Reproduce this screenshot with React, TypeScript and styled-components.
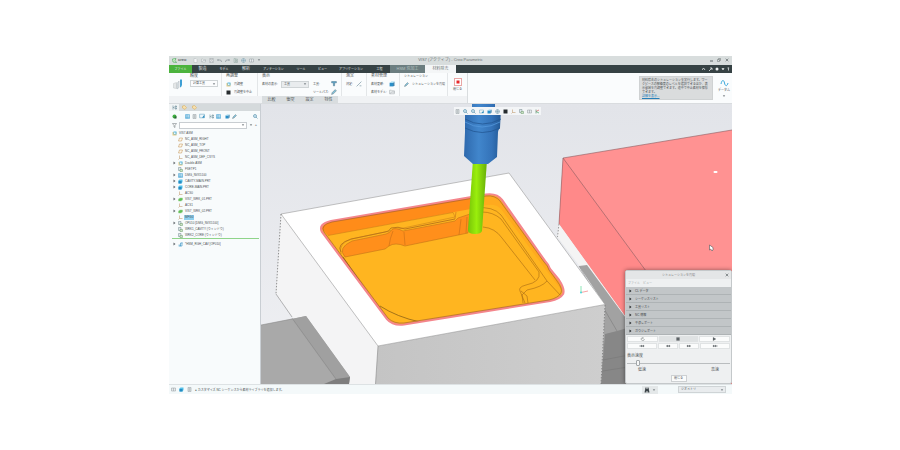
import React from "react";
import styled, { createGlobalStyle } from "styled-components";

const GlobalStyle = createGlobalStyle`
  *, *::before, *::after { box-sizing: border-box; }
  body { margin: 0; background: #ffffff; }
  button, select, input {
    margin: 0; padding: 0; border: 0; border-radius: 0;
    font: inherit; color: inherit; background: none; appearance: none; outline: none;
  }
  svg { display: block; flex: none; }
`;

const Page = styled.div`
  min-height: 100vh;
  padding: 56px 168px 56px 169px;
  display: flex;
  font-family: "Liberation Sans", "Noto Sans CJK JP", sans-serif;
  font-size: 3px;
  line-height: 6px;
  color: #4c5254;
  white-space: nowrap;
`;

const AppWindow = styled.div`
  flex: 1;
  min-width: 0;
  display: flex;
  flex-direction: column;
  background: #f7f9fb;
`;

/* ---------- title bar ---------- */

const TitleBar = styled.header`
  display: grid;
  grid-template-columns: 1fr auto 1fr;
  align-items: center;
  height: 9px;
  padding: 0 3px 1px;
  background: #d8dddd;
`;

const QuickAccess = styled.div`
  display: flex;
  align-items: center;
  gap: 3px;
`;

const Brand = styled.span`
  display: flex;
  align-items: center;
  gap: 1px;
  margin-right: 4px;
  font-size: 4px;
  font-weight: bold;
  color: #596365;
`;

const WindowTitle = styled.h1`
  margin: 0;
  font-size: 4px;
  font-weight: normal;
  color: #6c7273;
`;

const WindowButtons = styled.div`
  display: flex;
  justify-content: flex-end;
  gap: 4px;
`;

const IconButton = styled.button`
  display: flex;
  align-items: center;
  justify-content: center;
`;

/* ---------- tabs ---------- */

const TabBar = styled.nav`
  display: flex;
  height: 8px;
  background: #364244;
`;

type Tone = "file" | "context" | "active" | "plain";

const Tab = styled.button<{ $width: number; $size: number; $tone: Tone }>`
  width: ${(p) => p.$width}px;
  font-size: ${(p) => p.$size}px;
  line-height: 8px;
  text-align: center;
  color: ${(p) => (p.$tone === "active" ? "#6b7173" : p.$tone === "context" ? "#b6c2c2" : "#e3e7e7")};
  background: ${(p) =>
    p.$tone === "file" ? "#4bb33d" : p.$tone === "context" ? "#6c7e80" : p.$tone === "active" ? "#f4f6f7" : "none"};
`;

const TabTools = styled.div`
  flex: 1;
  display: flex;
  justify-content: flex-end;
  align-items: center;
  padding-right: 2px;
`;

/* ---------- ribbon ---------- */

const Ribbon = styled.section`
  display: flex;
  height: 31px;
  background: #fafcfd;
  border-bottom: 1px solid #d9dcdf;
`;

const RibbonMain = styled.div`
  display: flex;
  flex-direction: column;
  border-right: 1px solid #d9dddf;
`;

const RibbonGroups = styled.div`
  flex: 1;
  display: flex;
`;

const Group = styled.div<{ $width: number }>`
  width: ${(p) => p.$width}px;
  padding: 0 4px;
  border-right: 1px solid #e3e6e8;
`;

const GroupTitle = styled.div<{ $small?: boolean }>`
  height: 7px;
  font-size: ${(p) => (p.$small ? 3 : 4)}px;
`;

const Line = styled.div`
  display: flex;
  align-items: center;
  gap: 2px;
  height: 8px;
`;

const FieldLabel = styled.label<{ $width: number }>`
  width: ${(p) => p.$width}px;
`;

const SelectBox = styled.span<{ $width: number; $muted?: boolean }>`
  display: flex;
  align-items: center;
  width: ${(p) => p.$width}px;
  height: 7px;
  padding: 0 1px 0 2px;
  border: 1px solid #cfd4d6;
  background: ${(p) => (p.$muted ? "#e9ecee" : "#fbfcfd")};
  select { flex: 1; min-width: 0; height: 5px; line-height: 5px; }
`;

const Command = styled.button`
  display: flex;
  align-items: center;
  gap: 3px;
  height: 8px;
`;

const BigCommand = styled.button<{ $width: number }>`
  width: ${(p) => p.$width}px;
  display: flex;
  flex-direction: column;
  align-items: center;
  justify-content: center;
  gap: 1px;
  line-height: 5px;
`;

const SubTabs = styled.div`
  display: flex;
  height: 7px;
  padding-left: 93px;
  background: #f0f2f4;
`;

const SubTab = styled.button`
  width: 19px;
  font-size: 4px;
  line-height: 6px;
  text-align: center;
  background: #d9dddf;
`;

const Hint = styled.aside`
  width: 74px;
  margin: 3px 3px 3px auto;
  padding: 1px 2px;
  line-height: 4px;
  background: #dadcdd;
  border: 1px solid #cfd2d3;
  white-space: normal;
  p { margin: 0; }
  a { display: block; color: #267fb8; }
`;

/* ---------- body ---------- */

const Workspace = styled.div`
  flex: 1;
  display: flex;
  min-height: 0;
`;

const Sidebar = styled.aside`
  width: 92px;
  display: flex;
  flex-direction: column;
  background: #f8fbfc;
  border-right: 1px solid #c9ced3;
`;

const SideTabs = styled.div`
  display: flex;
  align-items: center;
  height: 7px;
  background: #d5dadc;
`;

const SideTab = styled.button<{ $current?: boolean }>`
  display: flex;
  align-items: center;
  justify-content: center;
  width: 10px;
  height: 7px;
  background: ${(p) => (p.$current ? "#f1f4f5" : "none")};
`;

const SideTools = styled.div`
  display: flex;
  align-items: center;
  gap: 2px;
  height: 10px;
  padding: 0 2px 0 3px;
`;

const ToolSet = styled.div<{ $start: number }>`
  display: flex;
  align-items: center;
  gap: 2px;
  margin-left: ${(p) => p.$start}px;
`;

const Spacer = styled.span`
  flex: 1;
`;

const FilterRow = styled.div`
  display: flex;
  align-items: center;
  gap: 2px;
  height: 8px;
  padding: 0 3px;
  font-size: 4px;
`;

const FilterBox = styled.div`
  display: flex;
  align-items: center;
  width: 68px;
  height: 7px;
  padding-right: 1px;
  border: 1px solid #c8cdd1;
  background: #ffffff;
  input { flex: 1; min-width: 0; height: 5px; }
`;

const Tree = styled.ul`
  margin: 0;
  padding: 1px 0 0;
  list-style: none;
`;

const Node = styled.li<{ $root?: boolean }>`
  display: flex;
  align-items: center;
  gap: 1px;
  height: 6px;
  padding-left: ${(p) => (p.$root ? 3 : 4)}px;
`;

const Twisty = styled.span`
  width: 4px;
`;

const NodeName = styled.span<{ $selected?: boolean }>`
  padding: 0 1px;
  line-height: 5px;
  background: ${(p) => (p.$selected ? "#8ed0ef" : "none")};
`;

const InsertLine = styled.div`
  height: 1px;
  margin: 0 1px 1px 3px;
  background: #8fd48a;
`;

const Viewport = styled.main`
  position: relative;
  flex: 1;
  min-width: 0;
  overflow: hidden;
  background: #e6e8ed;
`;

const SceneSvg = styled.svg`
  width: 100%;
  height: 100%;
`;

const ViewTools = styled.div`
  position: absolute;
  top: 3px;
  left: 193px;
  display: flex;
  align-items: center;
  gap: 3px;
  height: 8px;
  padding: 0 1px;
  background: #f3f5f7;
`;

/* ---------- dialog ---------- */

const Dialog = styled.section`
  position: absolute;
  right: 0;
  bottom: 0;
  width: 107px;
  padding-bottom: 1px;
  background: #eef0f1;
  border: 1px solid #c4c8ca;
  border-radius: 2px;
  box-shadow: 0 0 4px rgba(0, 0, 0, 0.45);
`;

const DialogTitle = styled.header`
  display: grid;
  grid-template-columns: 1fr auto 1fr;
  align-items: center;
  height: 8px;
  padding: 0 2px;
  background: #e4e6e7;
  color: #7d8182;
  h2 { margin: 0; font-size: 3px; font-weight: normal; }
  button { justify-self: end; }
`;

const DialogMenu = styled.nav`
  display: flex;
  gap: 3px;
  height: 8px;
  padding: 1px 2px;
  color: #a9aeb0;
`;

const Section = styled.button`
  display: flex;
  align-items: center;
  gap: 3px;
  width: 100%;
  height: 8px;
  padding-left: 3px;
  background: #c2c6c8;
  border-bottom: 1px solid #aeb3b5;
  color: #45494c;
`;

const Transport = styled.div<{ $columns: string }>`
  display: grid;
  grid-template-columns: ${(p) => p.$columns};
  gap: 1px;
  padding: 1px 1px 0;
`;

const TransportButton = styled.button<{ $pressed?: boolean }>`
  display: flex;
  align-items: center;
  justify-content: center;
  height: 6px;
  border: 1px solid ${(p) => (p.$pressed ? "#dfe2e3" : "#e0e3e4")};
  background: ${(p) => (p.$pressed ? "#dfe2e3" : "#fbfcfc")};
`;

const SpeedLabel = styled.label`
  display: block;
  padding: 4px 1px 0;
  font-size: 4px;
`;

const Slider = styled.input`
  display: block;
  width: calc(100% - 2px);
  height: 8px;
  margin: 0 1px;
  background: linear-gradient(#b9bdbf, #b9bdbf) center / 100% 1px no-repeat;
  &::-webkit-slider-thumb {
    appearance: none;
    width: 4px;
    height: 6px;
    border: 1px solid #a2a7aa;
    border-radius: 1px;
    background: #f7f8f8;
  }
`;

const SpeedEnds = styled.div`
  display: flex;
  justify-content: space-between;
  padding: 0 12px;
  font-size: 4px;
`;

const CloseButton = styled.button`
  display: block;
  width: 16px;
  height: 7px;
  margin: 2px auto 0;
  line-height: 5px;
  border: 1px solid #cdd0d2;
  background: #fafbfb;
`;

/* ---------- status bar ---------- */

const StatusBar = styled.footer`
  display: flex;
  align-items: center;
  gap: 3px;
  height: 10px;
  padding: 0 6px 0 2px;
  background: #f4f9fa;
  border-top: 1px solid #dde2e4;
`;

const Find = styled.div`
  display: flex;
  align-items: center;
  gap: 2px;
  width: 16px;
  height: 8px;
  margin-right: 17px;
  padding: 0 2px;
  background: #e4e8e9;
`;

/* ---------- icons ---------- */

const Chevron = () => (
  <svg width="4" height="4" viewBox="0 0 4 4">
    <path d="M.8 1.3h2.4L2 2.9z" fill="#7c8387" />
  </svg>
);

const Arrow = ({ color = "#24282a" }: { color?: string }) => (
  <svg width="3" height="4" viewBox="0 0 3 4">
    <path d="M.5.5v3L2.5 2z" fill={color} />
  </svg>
);

const Play = ({ d }: { d: string }) => (
  <svg width="8" height="4" viewBox="0 0 8 4">
    <path d={d} fill="#5c6366" stroke="#5c6366" strokeWidth=".2" />
  </svg>
);

const Cross = () => (
  <svg width="4" height="4" viewBox="0 0 4 4">
    <path d="M.7.7l2.6 2.6M3.3.7L.7 3.3" stroke="#60686a" strokeWidth=".7" />
  </svg>
);

type Glyph =
  | "doc" | "open" | "save" | "undo" | "redo" | "regen" | "globe" | "window"
  | "cube" | "tree" | "rows" | "page" | "plane" | "axis" | "steps" | "part"
  | "wrk" | "folder" | "magnify" | "filter" | "pencil" | "tool" | "black"
  | "ball" | "assembly" | "path" | "frame" | "triad" | "sequence";

const Icon = ({ name, size = 5 }: { name: Glyph; size?: number }) => {
  const blue = "#3c9fd0";
  const gray = "#8b9499";
  const shapes: Record<Glyph, React.ReactNode> = {
    doc: <path d="M2 1h4l2 2v6H2z" fill="#f3f5f6" stroke="#b4babd" />,
    open: <path d="M1 8V2h3l1 1h4v5zM2 8l2-3h6" fill="#eef1f2" stroke="#a9b0b3" />,
    save: <path d="M1 1h8v8H1zM3 1v3h4V1M3 9V6h4v3" fill="#eef1f2" stroke="#a0a7aa" />,
    undo: <path d="M3 2L1 4l2 2M1 4h5q3 0 3 4" fill="none" stroke={gray} strokeWidth="1.400" />,
    redo: <path d="M7 2l2 2-2 2M9 4H4Q1 4 1 8" fill="none" stroke={gray} strokeWidth="1.400" />,
    regen: <path d="M2 1h3v8H2zM6 2h3v3H6zM6 6h3v3H6z" fill="#cfd9d7" stroke="#96aaa5" />,
    globe: <path d="M5 1a4 4 0 100 8 4 4 0 000-8zM1 5h8M5 1v8" fill="#d4e3ea" stroke="#7b9bab" />,
    window: <path d="M1 2h8v6H1zM5 2v6" fill="#e8ecee" stroke="#929b9f" />,
    cube: <g><path d="M1 3h6v6H1z" fill="#2b8fc8" /><path d="M7 3l2-2v6L7 9z" fill="#1d6d9e" /><path d="M1 3l3-2h5L7 3z" fill="#9bd7ef" /></g>,
    tree: <path d="M2 1v8M2 5h3M6 2h3v2H6zM6 6h3v2H6z" fill="none" stroke="#4e7787" />,
    rows: <path d="M1 1h8v8H1zM4 1v8M1 4h8M1 7h8" fill="#d9edf6" stroke={blue} />,
    page: <path d="M2 1h6v8H2zM3 3h4M3 5h4M3 7h4" fill="#f4f6f7" stroke={gray} />,
    plane: <path d="M3 2h6L7 8H1z" fill="#fff8ea" stroke="#bd8c4d" />,
    axis: <path d="M3 1v6h6M3 7L1 9" fill="none" stroke="#b88c5a" />,
    steps: <g><path d="M1 1h5v6H1z" fill="#dfe8ea" stroke="#73868e" /><path d="M4 5h5v4H4z" fill="#cfe3c6" stroke="#669968" /></g>,
    part: <g><path d="M1 3l2-2h6v5L7 9H1z" fill="#54c1e9" /><path d="M1 4h6v5H1z" fill="#258bc1" /></g>,
    wrk: <path d="M1 4l3-2h5v4L6 8H1z" fill="#62bf58" stroke="#9bd58f" />,
    folder: <path d="M1 2l4-1 4 4-3 4-5-3z" fill="#f7dfad" stroke="#d5a850" />,
    magnify: <path d="M4 1a3 3 0 100 6 3 3 0 000-6zM6 6l3 3" fill="#cfe8f4" stroke="#4b88a5" strokeWidth="1.200" />,
    filter: <path d="M1 1h8L6 5v4L4 8V5z" fill="#f4f6f7" stroke="#697277" />,
    pencil: <path d="M1 9l1-3 5-5 2 2-5 5z" fill="#7fc4dd" stroke="#78858b" />,
    tool: <path d="M1 1h8v2H6v5H4V3H1z" fill="#4aa5d5" stroke="#5c7f91" />,
    black: <path d="M1 1h8v8H1z" fill="#272c2e" />,
    ball: <g><circle cx="5" cy="5" r="4" fill="#3cae3f" /><path d="M5 5h4v4H5z" fill="#2c5f39" /></g>,
    assembly: <g><path d="M1 2h8v7H1z" fill="#eacb83" /><path d="M3 1h6v6H3z" fill="#59b8e3" /><path d="M4 3h3v3H4z" fill="#eef8fc" /></g>,
    path: <path d="M1 9l8-8M6 8h3" fill="none" stroke="#7d99a6" strokeWidth="1.200" />,
    frame: <g><path d="M1 2h8v6H1z" fill="#eff7fa" stroke="#6fa9c3" /><path d="M5 8l4-5v5z" fill="#2a8cc0" /></g>,
    triad: <g><path d="M2 1v8" stroke="#72907d" strokeWidth="1.500" /><path d="M2 5l6-3" stroke="#d76868" strokeWidth="1.500" /><path d="M2 5l6 3" stroke="#4fae72" strokeWidth="1.500" /></g>,
    sequence: <g><path d="M1 5h4v4H1z" fill="#9ac9e1" /><path d="M5 8V2h4M8 1v7H3" fill="none" stroke="#3290c2" strokeWidth="1.200" /></g>,
  };
  return (
    <svg width={size} height={size} viewBox="0 0 10 10">
      {shapes[name]}
    </svg>
  );
};

const CreoMark = () => (
  <svg width="5" height="5" viewBox="0 0 10 10">
    <path d="M1 2l7-1-2 4 3 4-7-1z" fill="#d9f1d2" stroke="#48a85a" strokeWidth="1.300" />
  </svg>
);

const SimulationIcon = () => (
  <svg width="11" height="11" viewBox="0 0 22 22">
    <path d="M3 9l6-2v12l-6-1z" fill="#e4e7e8" stroke="#c0c6c9" />
    <path d="M10 9l4-5v13l-4 3z" fill="#dde3e6" stroke="#a9b3b8" />
    <path d="M16 1h4v11q-1 4-4 5z" fill="#3e9fd4" />
  </svg>
);

const WaveIcon = () => (
  <svg width="9" height="8" viewBox="0 0 9 8">
    <path d="M1 5C2 0 4 1 4.500 4S7 8 8 4" fill="none" stroke="#3ba9dd" strokeWidth="1" />
  </svg>
);

/* ---------- drawing of the machined block ---------- */

const pocket =
  "M331 221L486 194.500Q497 193 502 200L545 261Q549 265 550 269L559 280Q565 289 563 294Q560 299 550 301L404 324.500Q393 326 387 319L322 232Q318 224 331 221Z";

const Scene = () => (
  <SceneSvg viewBox="261 104 471 280" preserveAspectRatio="xMidYMid slice" role="img" aria-label="NC">
    <defs>
      <linearGradient id="sky" x1="0" y1="0" x2="0" y2="1">
        <stop offset="0" stopColor="#e2e4e9" />
        <stop offset="1" stopColor="#eff0f3" />
      </linearGradient>
      <linearGradient id="holder">
        <stop offset="0" stopColor="#2e69ad" />
        <stop offset=".4" stopColor="#4186cc" />
        <stop offset=".75" stopColor="#3473b9" />
        <stop offset="1" stopColor="#235995" />
      </linearGradient>
      <linearGradient id="cutter">
        <stop offset="0" stopColor="#78c408" />
        <stop offset=".45" stopColor="#9aee0c" />
        <stop offset="1" stopColor="#67ad08" />
      </linearGradient>
      <linearGradient id="front">
        <stop offset="0" stopColor="#c4c4c4" />
        <stop offset="1" stopColor="#cecece" />
      </linearGradient>
      <clipPath id="pocketClip">
        <path d={pocket} />
      </clipPath>
    </defs>
    <rect x="261" y="104" width="471" height="280" fill="url(#sky)" />

    <path d="M563 158L732 130V384H674L559 224Z" fill="#ff9292" />
    <path d="M563 158L559 224L674 384H732L645 270Z" fill="#ff8989" />
    <path d="M559 224L563 158L732 130M563 158L732 388" fill="none" stroke="#8a5c60" strokeWidth=".6" />
    <path d="M559 224L557.500 237L581 268L640 350L674 384Z" fill="#f4f4f4" />
    <path d="M579 266L587 265L634 329V384H601L605 305Z" fill="#a2a2a2" />
    <path d="M605 334L617 331L634 326V384H601Z" fill="#878787" />
    <path d="M579 266L617 331M603 360L634 354M603 371L634 366" fill="none" stroke="#747474" strokeWidth=".5" />
    <path d="M559 224L557.500 237" stroke="#777" strokeWidth=".7" strokeDasharray="1.500 1.500" />

    <path d="M281 214L378 346L375.500 384H341L276 294Z" fill="#f4f4f5" />
    <path d="M378 346L605 304.500L601 384H375.500Z" fill="url(#front)" />
    <path d="M281 214L509 173L605 304.500L378 346Z" fill="#fff" stroke="#999" strokeWidth=".6" />
    <path d="M378 346L375.500 384M276 294L292 317" stroke="#888" strokeWidth=".6" />
    <path d="M281 214L276 294M605 305L601 384" stroke="#777" strokeWidth=".8" strokeDasharray="1.500 1.500" />
    <path d="M261 325L306 316L350 377L349 384H261Z" fill="#a9a9a9" />
    <path d="M292 319L306 316L350 377L336 380Z" fill="#a0a0a0" />
    <path d="M336 379L350 377L349 384H324Z" fill="#7e7e7e" />
    <path d="M261 325L292 319M292 318L336 379" fill="none" stroke="#858585" strokeWidth=".5" />

    <g clipPath="url(#pocketClip)">
      <rect x="316" y="190" width="252" height="140" fill="#ffb520" />
      <path d="M316 218L478 190L476 208L328 235.500L316 222Z" fill="#ff8c19" />
      <path d="M478 190L505 195L575 296L548 304L564 293Q558 286 546 270L501 209Q494 201 476 208Z" fill="#ffaa1e" />
      <path d="M328 235.500L453 212.500L455 217L352 239Q338 243 341 254" fill="none" stroke="#c57b18" strokeWidth=".5" />
      <path d="M345 257Q337 248 352 241L386 234Q390 233 392 229.500Q395 227 403 231L455 221L458 218L470 214L468 233L405 246Q395 242 389 246L385 249Z" fill="#ff8f1b" stroke="#b66c18" strokeWidth=".5" />
      <path d="M341 252Q336 244 351 239L385 232Q389 232 391 228Q398 226 405 229L455 219" fill="none" stroke="#b8731a" strokeWidth=".9" />
      <path d="M393 231Q390 238 389 246M404 232L405 245M461 219L459 235M467 217L466 233M456 212L455 219" fill="none" stroke="#bd6919" strokeWidth=".5" />
      <path d="M476 208Q493 206 501 215L547 281M482 212Q493 212 501 219L539 272Q541 282 526 285Q518 287 520 291L525 303M483 227Q495 228 502 238L535 280M523 303L522 295L527 290Q542 287 547 281L562 297M521 291L527 296L528 303" fill="none" stroke="#a66a14" strokeWidth=".6" />
      <path d="M316 230L343 257L368 293L380 307L387 320L384 324Z" fill="#e99d1d" />
      <path d="M343 257L368 293M380 306Q397 317 420 322" fill="none" stroke="#7c5615" strokeWidth=".7" />
    </g>
    <path d={pocket} fill="none" stroke="#f4868c" strokeWidth="2.200" />
    <path d="M332 222L486 196Q495 195 500 201L544 262Q548 266 549 270L557 281Q563 289 561 293Q558 298 549 300L404 323Q394 324 388 318L324 232Q320 225 332 222Z" fill="none" stroke="#9c5b30" strokeWidth=".6" />

    <path d="M473 160H487L482 231Q481 234 475 234Q468 234 468 230Z" fill="url(#cutter)" />
    <path d="M472 104H495V108H501L500 128Q498 130 498 132L497 157L488 164H473L464 156L465 132L465 128V108H472Z" fill="url(#holder)" />
    <path d="M465 119Q482 129 501 119M465 128Q482 137 500 128" fill="none" stroke="#225793" strokeWidth=".8" />
    <path d="M465 122Q482 132 500 122" fill="none" stroke="#5498dc" strokeWidth=".8" />

    <path d="M581 293V286" stroke="#72dfa5" strokeWidth=".8" />
    <path d="M581 292.500L588 291" stroke="#f58d8d" strokeWidth=".8" />
    <circle cx="581" cy="292.500" r="1" fill="#4cd9dc" />
    <rect x="713.500" y="171" width="4" height="2" rx="1" fill="#fff" />
    <path d="M709.500 245V250L710.700 249L712 251L713 250V247.500Z" fill="#fff" stroke="#4f5559" strokeWidth=".6" />
  </SceneSvg>
);

/* ---------- data ---------- */

const tabs: { name: string; width: number; size: number; tone?: Tone }[] = [
  { name: "ファイル", width: 23, size: 3, tone: "file" },
  { name: "製造", width: 21, size: 4 },
  { name: "モデル", width: 22, size: 3 },
  { name: "解析", width: 22, size: 4 },
  { name: "アノテーション", width: 33, size: 3 },
  { name: "ツール", width: 22, size: 3 },
  { name: "ビュー", width: 21, size: 3 },
  { name: "アプリケーション", width: 36, size: 3 },
  { name: "工程", width: 21, size: 3 },
  { name: "HSM 荒加工", width: 35, size: 4, tone: "context" },
  { name: "材料除去", width: 31, size: 4, tone: "active" },
];

type NodeSpec = { icon: Glyph; name: string; open?: boolean; selected?: boolean };
const nodes: NodeSpec[] = [
  { icon: "plane", name: "NC_ASM_RIGHT" },
  { icon: "plane", name: "NC_ASM_TOP" },
  { icon: "plane", name: "NC_ASM_FRONT" },
  { icon: "axis", name: "NC_ASM_DEF_CSYS" },
  { icon: "assembly", name: "Double.ASM", open: true },
  { icon: "steps", name: "FSETP1" },
  { icon: "rows", name: "DMG_NVX5100", open: true },
  { icon: "part", name: "CAVITY-MAIN.PRT", open: true },
  { icon: "part", name: "CORE-MAIN.PRT", open: true },
  { icon: "axis", name: "ACS0" },
  { icon: "wrk", name: "VIS7_WRK_01.PRT", open: true },
  { icon: "axis", name: "ACS1" },
  { icon: "wrk", name: "VIS7_WRK_02.PRT", open: true },
  { icon: "axis", name: "MFG0", selected: true },
  { icon: "steps", name: "OP010 [DMG_NVX5100]", open: true },
  { icon: "steps", name: "WRK1_CAVITY (ウィンドウ)" },
  { icon: "steps", name: "WRK2_CORE (ウィンドウ)" },
];

const sections = ["CL データ", "シーケンスリスト", "工具リスト", "NC 情報", "干渉レポート", "ガウジレポート"];
const quick: Glyph[] = ["doc", "open", "save", "undo", "redo", "regen", "globe", "window"];
const viewIcons: Glyph[] = ["page", "magnify", "magnify", "frame", "cube", "globe", "black", "axis", "steps", "window", "triad"];

const TreeNode = ({ icon, name, open, selected }: NodeSpec) => (
  <Node>
    <Twisty>{open && <Arrow color="#62696d" />}</Twisty>
    <Icon name={icon} />
    <NodeName $selected={selected}>{name}</NodeName>
  </Node>
);

export default function App() {
  return (
    <>
      <GlobalStyle />
      <Page>
        <AppWindow>
          <TitleBar>
            <QuickAccess>
              <Brand><CreoMark />creo</Brand>
              {quick.map((name) => (
                <IconButton key={name} aria-label={name}><Icon name={name} /></IconButton>
              ))}
              <Chevron />
            </QuickAccess>
            <WindowTitle>VIS7 (アクティブ) - Creo Parametric</WindowTitle>
            <WindowButtons>
              <IconButton aria-label="最小化"><svg width="4" height="4"><path d="M1 3h3" stroke="#60686a" /></svg></IconButton>
              <IconButton aria-label="最大化"><svg width="4" height="4" viewBox="0 0 8 8"><path d="M1 3h4v4H1zM3 3V1h4v4H5" fill="none" stroke="#60686a" /></svg></IconButton>
              <IconButton aria-label="閉じる"><Cross /></IconButton>
            </WindowButtons>
          </TitleBar>

          <TabBar>
            {tabs.map(({ name, width, size, tone = "plain" }) => (
              <Tab key={name} $width={width} $size={size} $tone={tone}>{name}</Tab>
            ))}
            <TabTools>
              <svg width="28" height="4" viewBox="0 0 28 4">
                <path d="M0 3l1.500-2L3 3M7 4l3-3M8 1h2v2M20 1.500h2L21 3z" fill="none" stroke="#dfe5e5" strokeWidth=".8" />
                <circle cx="15" cy="2" r="1.500" fill="#edf0f0" />
                <path d="M25.500 1q2-1 1 1v1.500" fill="none" stroke="#dfe5e5" strokeWidth=".8" />
              </svg>
            </TabTools>
          </TabBar>

          <Ribbon>
            <RibbonMain>
              <RibbonGroups>
                <BigCommand $width={17} aria-label="シミュレーション"><SimulationIcon /></BigCommand>
                <Group $width={36}>
                  <GroupTitle>精度</GroupTitle>
                  <SelectBox $width={28}>
                    <select aria-label="精度"><option>計算工具</option></select><Chevron />
                  </SelectBox>
                </Group>
                <Group $width={36}>
                  <GroupTitle>再調整</GroupTitle>
                  <Command><Icon name="assembly" />再調整</Command>
                  <Command><Icon name="black" />再調整を中止</Command>
                </Group>
                <Group $width={84}>
                  <GroupTitle>表示</GroupTitle>
                  <Line>
                    <FieldLabel htmlFor="stock" $width={17}>素材の表示:</FieldLabel>
                    <SelectBox $width={28} $muted>
                      <select id="stock"><option>工具</option></select><Chevron />
                    </SelectBox>
                    <Spacer />
                    <FieldLabel as="span" $width={16}>工具:</FieldLabel><Icon name="tool" size={6} />
                  </Line>
                  <Line>
                    <Spacer />
                    <FieldLabel as="span" $width={16}>ツールパス:</FieldLabel><Icon name="pencil" size={6} />
                  </Line>
                </Group>
                <Group $width={25}>
                  <GroupTitle>測定</GroupTitle>
                  <Command>測定:<Icon name="path" size={6} /></Command>
                </Group>
                <Group $width={33}>
                  <GroupTitle>素材管理</GroupTitle>
                  <Line><FieldLabel as="span" $width={16}>素材更新:</FieldLabel><Icon name="cube" size={6} /></Line>
                  <Line><FieldLabel as="span" $width={16}>素材モデル:</FieldLabel><Icon name="open" size={6} /></Line>
                </Group>
                <Group $width={48}>
                  <GroupTitle $small>シミュレーション</GroupTitle>
                  <Command><Icon name="pencil" />シミュレーションを再現</Command>
                </Group>
                <BigCommand $width={19}>
                  <svg width="8" height="8" viewBox="0 0 8 8">
                    <rect x=".5" y=".5" width="7" height="7" fill="#fff" stroke="#e9a6a5" />
                    <rect x="2.500" y="2.500" width="3" height="3" fill="#e8282b" />
                  </svg>
                  閉じる
                </BigCommand>
              </RibbonGroups>
              <SubTabs>
                {["比較", "衝突", "設定", "特性"].map((name) => <SubTab key={name}>{name}</SubTab>)}
              </SubTabs>
            </RibbonMain>
            <Hint>
              <p>材料除去のシミュレーションを実行します。ワークピースの解像度のレベルを選択できるほか、表示領域を再調整できます。途中で中止素材を保存できます。</p>
              <a href="#details">詳細を表示...</a>
            </Hint>
            <BigCommand $width={16}><WaveIcon />データム<Chevron /></BigCommand>
          </Ribbon>

          <Workspace>
            <Sidebar>
              <SideTabs>
                <SideTab $current aria-label="モデルツリー"><Icon name="tree" /></SideTab>
                <SideTab aria-label="フォルダ"><Icon name="folder" /></SideTab>
                <SideTab aria-label="お気に入り"><Icon name="folder" /></SideTab>
              </SideTabs>
              <SideTools>
                <Icon name="ball" />
                <ToolSet $start={6}><Icon name="rows" /><Icon name="page" /><Icon name="frame" size={6} /></ToolSet>
                <ToolSet $start={2}><Icon name="tree" /><Icon name="rows" /></ToolSet>
                <ToolSet $start={2}><Icon name="cube" /><Icon name="pencil" /></ToolSet>
                <Spacer />
                <Icon name="magnify" />
              </SideTools>
              <FilterRow>
                <Icon name="filter" />
                <FilterBox><input aria-label="フィルタ" /><Chevron /></FilterBox>
                <Chevron />
                <IconButton aria-label="追加">+</IconButton>
              </FilterRow>
              <Tree>
                <Node $root><Icon name="assembly" /><NodeName>VIS7.ASM</NodeName></Node>
                {nodes.map((node) => <TreeNode key={node.name} {...node} />)}
              </Tree>
              <InsertLine />
              <Tree as="div">
                <TreeNode icon="sequence" name="*HSM_RGH_CAV [OP010]" open />
              </Tree>
            </Sidebar>

            <Viewport>
              <Scene />
              <ViewTools>
                {viewIcons.map((name, i) => (
                  <IconButton key={i} aria-label={`${name} ${i}`}><Icon name={name} /></IconButton>
                ))}
              </ViewTools>
              <Dialog aria-label="シミュレーションを再現">
                <DialogTitle>
                  <span />
                  <h2>シミュレーションを再現</h2>
                  <IconButton aria-label="閉じる"><Cross /></IconButton>
                </DialogTitle>
                <DialogMenu><button>ファイル</button><button>ビュー</button></DialogMenu>
                {sections.map((name) => <Section key={name}><Arrow />{name}</Section>)}
                <Transport $columns="4fr 5fr 4fr">
                  <TransportButton aria-label="リセット">
                    <svg width="5" height="4" viewBox="0 0 10 8"><path d="M5 0l2 2-2 2M6 2H4Q2 2 2 4t3 3 4-3" fill="none" stroke="#697073" /></svg>
                  </TransportButton>
                  <TransportButton aria-label="停止" $pressed><Play d="M2.500.5h3v3h-3z" /></TransportButton>
                  <TransportButton aria-label="再生"><Play d="M3 .3v3.400L6 2z" /></TransportButton>
                </Transport>
                <Transport $columns="3fr 2fr 2fr 3fr">
                  <TransportButton aria-label="最初"><Play d="M1.500 1v2M4 1L2 2l2 1zM6 1L4 2l2 1z" /></TransportButton>
                  <TransportButton aria-label="戻る"><Play d="M4 1L2 2l2 1zM6 1L4 2l2 1z" /></TransportButton>
                  <TransportButton aria-label="進む"><Play d="M2 1l2 1-2 1zM4 1l2 1-2 1z" /></TransportButton>
                  <TransportButton aria-label="最後"><Play d="M2 1l2 1-2 1zM4 1l2 1-2 1zM6.500 1v2" /></TransportButton>
                </Transport>
                <SpeedLabel htmlFor="speed">表示速度</SpeedLabel>
                <Slider id="speed" type="range" min={0} max={100} defaultValue={9} />
                <SpeedEnds><span>低速</span><span>高速</span></SpeedEnds>
                <CloseButton>閉じる</CloseButton>
              </Dialog>
            </Viewport>
          </Workspace>

          <StatusBar>
            <Icon name="window" /><Icon name="part" /><Icon name="page" />
            <span>● カスタマイズ NC シーケンスから素材ライブラリを追加します。</span>
            <Spacer />
            <Find>
              <svg width="6" height="6" viewBox="0 0 12 12"><path d="M3 1h2v3h2V1h2l2 10H7V8H5v3H1z" fill="#3e464a" /></svg>
              <Chevron />
            </Find>
            <SelectBox $width={48} $muted>
              <select aria-label="選択フィルタ"><option>ジオメトリ</option></select><Chevron />
            </SelectBox>
          </StatusBar>
        </AppWindow>
      </Page>
    </>
  );
}
